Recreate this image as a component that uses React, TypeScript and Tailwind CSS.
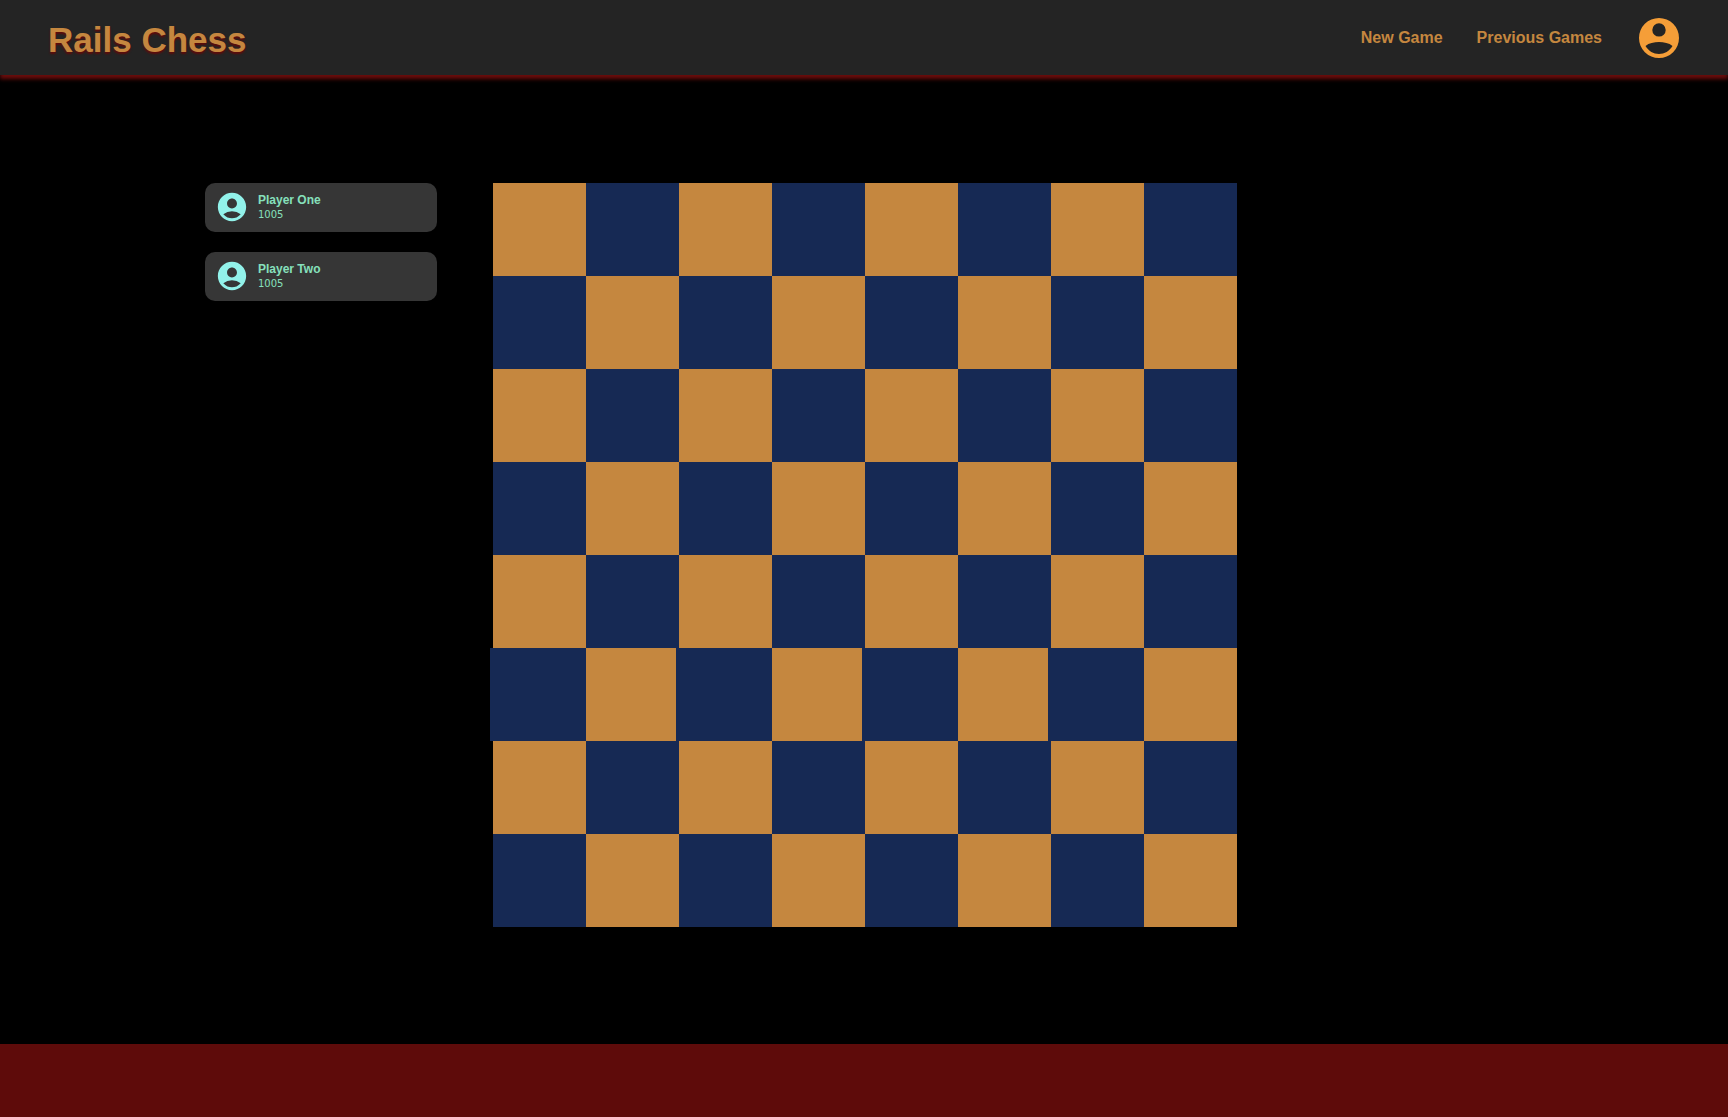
import React from "react";
import { MdAccountCircle } from "react-icons/md";

const players = [
  { name: "Player One", rating: 1005 },
  { name: "Player Two", rating: 1005 },
];

const SHIFTED_ROW = 5;

function squareClass(row: number, col: number) {
  if ((row + col) % 2 === 0) return "bg-[#c5873f]";
  if (row === SHIFTED_ROW) return "bg-[#162954] shadow-[-3px_0_0_#162954]";
  return "bg-[#162954]";
}

function AccountIcon() {
  return (
    <svg viewBox="0 0 48 48" className="size-12" fill="#f59e38" aria-hidden="true">
      <path
        fillRule="evenodd"
        d="M24 4a20 20 0 1 0 0 40a20 20 0 1 0 0-40zM24 9.200a6.700 6.700 0 1 1 0 13.400a6.700 6.700 0 1 1 0-13.400zM10.500 32C14 29 19 28 24 28s10 1 13.500 4C34.500 37 29.500 40 24 40s-10.500-3-13.500-8z"
      />
    </svg>
  );
}

export default function App() {
  return (
    <div className="flex min-h-screen flex-col bg-black font-['Liberation_Sans',sans-serif]">
      <header className="relative flex h-[75px] items-center justify-between bg-[#242424] pr-[45px] pl-12 shadow-[0_4px_4px_#6b0d0c]">
        <h1 className="pt-1 text-[35px] leading-10 font-bold text-[#c5873f] [text-shadow:0_2px_2px_#5e0b0a]">
          <a href="#">Rails Chess</a>
        </h1>
        <nav className="flex items-center text-base font-bold text-[#c5873f]">
          <a href="#new" className="mr-[34px]">New Game</a>
          <a href="#previous" className="mr-[33px]">Previous Games</a>
          <button type="button" aria-label="Account">
            <AccountIcon />
          </button>
        </nav>
      </header>

      <main className="flex flex-1 items-start justify-center gap-14 pt-[108px] pb-[117px]">
        <aside className="flex w-[232px] flex-col gap-5">
          {players.map((player) => (
            <section key={player.name} className="flex h-[49px] items-center gap-[9px] rounded-[10px] bg-[#363636] px-2.5 pb-0.5">
              <MdAccountCircle className="size-[34px] text-[#92f2ea]" />
              <div className="text-[#86e0bc]">
                <h2 className="text-xs leading-4 font-bold">{player.name}</h2>
                <p className="font-['DejaVu_Sans',sans-serif] text-[10px] leading-[14px]">{player.rating}</p>
              </div>
            </section>
          ))}
        </aside>

        <div className="grid w-[744px] grid-cols-8" aria-label="Chess board">
          {Array.from({ length: 64 }, (_, i) => (
            <div key={i} className={`aspect-square ${squareClass(Math.floor(i / 8), i % 8)}`} />
          ))}
        </div>

        <div className="w-[230px]" />
      </main>

      <footer className="h-[73px] bg-[#5e0b0a]" />
    </div>
  );
}
